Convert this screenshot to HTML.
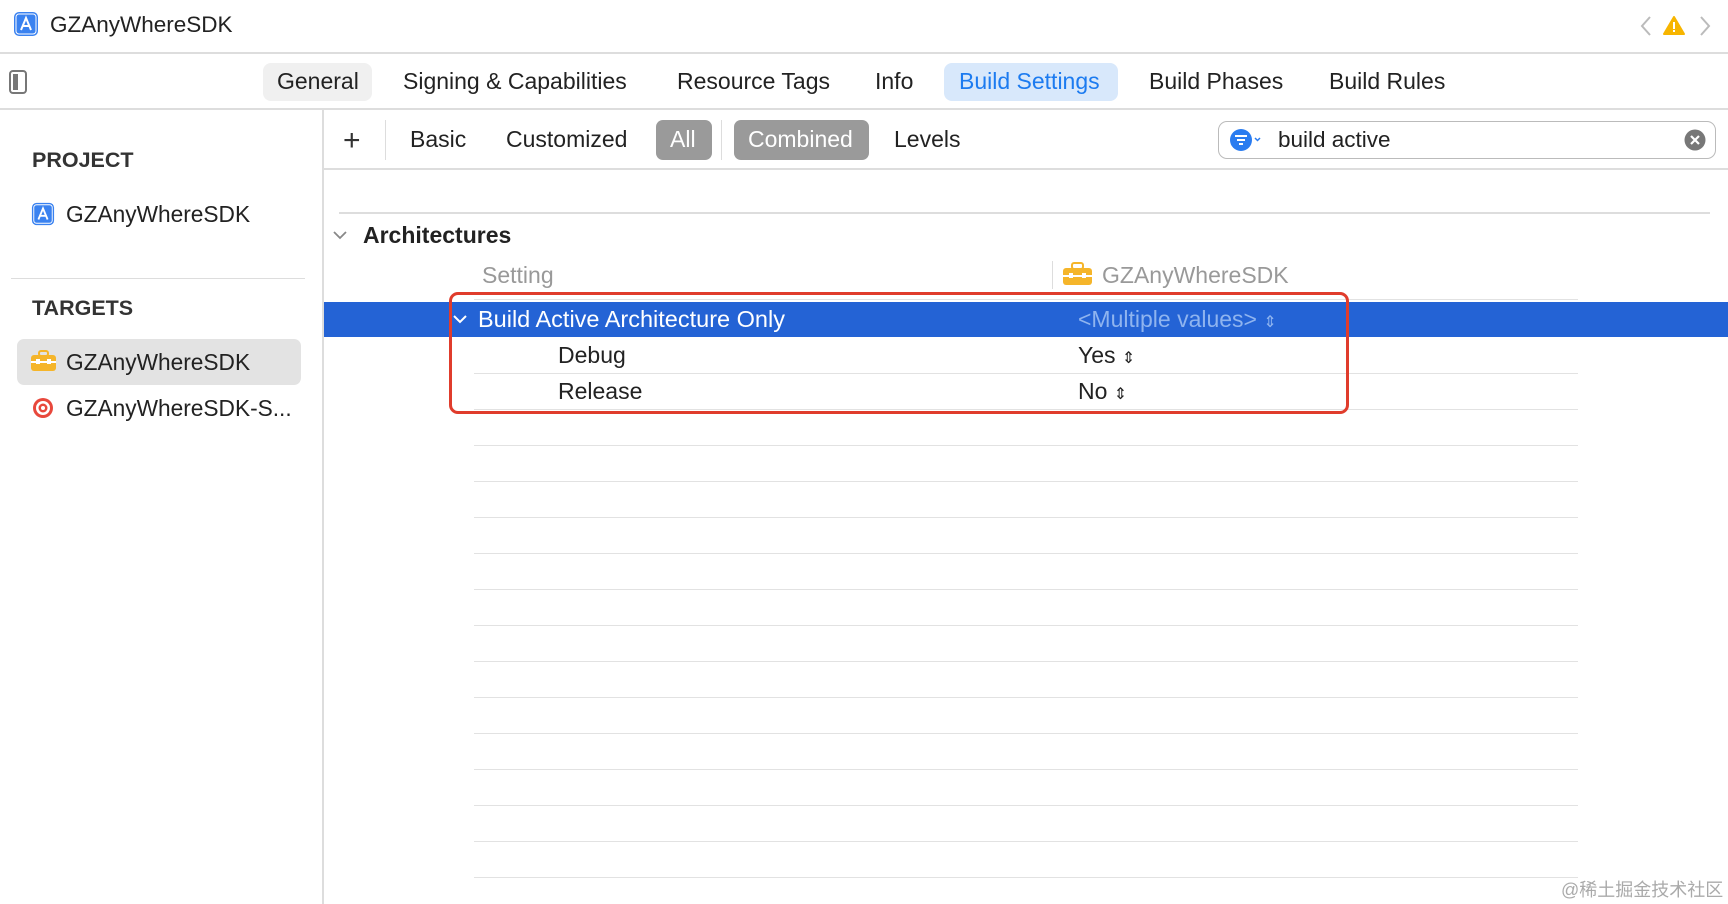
<!DOCTYPE html>
<html><head><meta charset="utf-8"><style>
*{margin:0;padding:0;box-sizing:border-box}
body{width:1728px;height:904px;overflow:hidden;background:#fff;font-family:"Liberation Sans","Noto Sans CJK SC",sans-serif;color:#222;position:relative}
.a{position:absolute;white-space:nowrap}
.t{font-size:23px;line-height:26px}
.hl{position:absolute;height:1px;background:#e2e2e2}
</style></head><body>
<!-- title bar -->
<svg class="a" style="left:13px;top:11px" width="26" height="26" viewBox="0 0 26 26"><rect x="1" y="1" width="24" height="24" rx="5" fill="#3a82f0"/><rect x="3" y="3" width="20" height="20" rx="3" fill="none" stroke="#fff" stroke-width="1"/><path d="M8 19 L13 7 L18 19 M10 15 H16" stroke="#fff" stroke-width="2" fill="none"/></svg>
<div class="a" style="left:50px;top:12px;font-size:22.5px">GZAnyWhereSDK</div>
<svg class="a" style="left:1637px;top:14px" width="80" height="24"><path d="M13 3 L5 12 L13 21" stroke="#bbb" stroke-width="2" fill="none"/><path d="M37 3 L47 20 H27 Z" fill="#f7b500" stroke="#f7b500" stroke-linejoin="round" stroke-width="2"/><rect x="36" y="8" width="2" height="7" fill="#fff"/><rect x="36" y="16" width="2" height="2" fill="#fff"/><path d="M64 3 L72 12 L64 21" stroke="#bbb" stroke-width="2" fill="none"/></svg>
<div class="hl" style="left:0;top:52px;width:1728px;background:#ddd;height:2px"></div>
<!-- tab bar -->
<div class="a" style="left:9px;top:70px;width:18px;height:24px;border:2px solid #777;border-radius:4px"><div style="width:5px;height:16px;background:#777;margin:2px 0 0 2px"></div></div>
<div class="a" style="left:263px;top:63px;width:109px;height:38px;background:#f0f0f0;border-radius:8px"></div>
<div class="a" style="left:944px;top:63px;width:174px;height:38px;background:#d8e8fb;border-radius:8px"></div>
<div class="a t" style="left:277px;top:68px">General</div>
<div class="a t" style="left:403px;top:68px">Signing &amp; Capabilities</div>
<div class="a t" style="left:677px;top:68px">Resource Tags</div>
<div class="a t" style="left:875px;top:68px">Info</div>
<div class="a t" style="left:959px;top:68px;color:#1c7bf0">Build Settings</div>
<div class="a t" style="left:1149px;top:68px">Build Phases</div>
<div class="a t" style="left:1329px;top:68px">Build Rules</div>
<div class="hl" style="left:0;top:108px;width:1728px;background:#ddd;height:2px"></div>
<!-- sidebar -->
<div class="a" style="left:322px;top:110px;width:2px;height:794px;background:#ddd"></div>
<div class="a" style="left:32px;top:148px;font-size:21.5px;font-weight:bold;color:#333">PROJECT</div>
<svg class="a" style="left:31px;top:202px" width="24" height="24" viewBox="0 0 26 26"><rect x="1" y="1" width="24" height="24" rx="5" fill="#3a82f0"/><rect x="3" y="3" width="20" height="20" rx="3" fill="none" stroke="#fff" stroke-width="1"/><path d="M8 19 L13 7 L18 19 M10 15 H16" stroke="#fff" stroke-width="2" fill="none"/></svg>
<div class="a" style="left:66px;top:201px;font-size:22.7px">GZAnyWhereSDK</div>
<div class="hl" style="left:11px;top:278px;width:294px;background:#ddd"></div>
<div class="a" style="left:32px;top:296px;font-size:21.5px;font-weight:bold;color:#333">TARGETS</div>
<div class="a" style="left:17px;top:339px;width:284px;height:46px;background:#e3e3e3;border-radius:7px"></div>
<svg class="a" style="left:30px;top:350px" width="27" height="22"><rect x="1" y="5" width="25" height="16" rx="3" fill="#f5b52a"/><rect x="9" y="1" width="9" height="5" rx="2" fill="none" stroke="#f5b52a" stroke-width="2"/><rect x="1" y="11" width="25" height="2" fill="#fff"/><rect x="6" y="9" width="4" height="5" fill="#fff"/><rect x="17" y="9" width="4" height="5" fill="#fff"/></svg>
<div class="a" style="left:66px;top:349px;font-size:22.7px">GZAnyWhereSDK</div>
<svg class="a" style="left:32px;top:397px" width="22" height="22"><circle cx="11" cy="11" r="10" fill="#e8483c"/><circle cx="11" cy="11" r="7" fill="#fff"/><circle cx="11" cy="11" r="4.5" fill="#e8483c"/><circle cx="11" cy="11" r="2" fill="#fff"/></svg>
<div class="a" style="left:66px;top:395px;font-size:22.7px">GZAnyWhereSDK-S...</div>
<!-- filter bar -->
<div class="a" style="left:343px;top:126px;font-size:30px;line-height:30px;font-weight:300;color:#333">+</div>
<div class="a" style="left:385px;top:120px;width:1px;height:40px;background:#ddd"></div>
<div class="a t" style="left:410px;top:126px">Basic</div>
<div class="a t" style="left:506px;top:126px">Customized</div>
<div class="a" style="left:656px;top:120px;width:56px;height:40px;background:#9a9a9a;border-radius:7px"></div>
<div class="a t" style="left:670px;top:126px;color:#fff">All</div>
<div class="a" style="left:721px;top:120px;width:1px;height:40px;background:#ddd"></div>
<div class="a" style="left:734px;top:120px;width:135px;height:40px;background:#9a9a9a;border-radius:7px"></div>
<div class="a t" style="left:748px;top:126px;color:#fff">Combined</div>
<div class="a t" style="left:894px;top:126px">Levels</div>
<div class="a" style="left:1218px;top:121px;width:498px;height:38px;border:1.5px solid #bbb;border-radius:9px"></div>
<svg class="a" style="left:1228px;top:127px" width="34" height="26"><circle cx="13" cy="13" r="11" fill="#2a7cf0"/><path d="M7 9H19M9 13H17M11 17H15" stroke="#fff" stroke-width="2"/><path d="M27 11 L29.5 13.5 L32 11" stroke="#2a7cf0" stroke-width="1.5" fill="none"/></svg>
<div class="a" style="left:1278px;top:127px;font-size:22.5px">build active</div>
<svg class="a" style="left:1684px;top:129px" width="22" height="22"><circle cx="11" cy="11" r="10.5" fill="#777"/><path d="M7 7L15 15M15 7L7 15" stroke="#fff" stroke-width="2.2"/></svg>
<div class="hl" style="left:324px;top:168px;width:1404px;background:#ddd;height:2px"></div>
<!-- content -->
<div class="hl" style="left:339px;top:212px;width:1371px;background:#ddd;height:2px"></div>
<svg class="a" style="left:332px;top:229px" width="16" height="12"><path d="M2 3 L8 9 L14 3" stroke="#888" stroke-width="1.8" fill="none"/></svg>
<div class="a" style="left:363px;top:222px;font-size:23px;font-weight:bold">Architectures</div>
<div class="a t" style="left:482px;top:262px;color:#999">Setting</div>
<div class="a" style="left:1052px;top:261px;width:1px;height:28px;background:#ddd"></div>
<svg class="a" style="left:1062px;top:262px" width="31" height="24"><rect x="1" y="6" width="29" height="17" rx="3" fill="#f5b52a"/><rect x="10" y="1" width="11" height="6" rx="2" fill="none" stroke="#f5b52a" stroke-width="2"/><rect x="1" y="13" width="29" height="2" fill="#fff"/><rect x="7" y="11" width="4" height="5" fill="#fff"/><rect x="20" y="11" width="4" height="5" fill="#fff"/></svg>
<div class="a t" style="left:1102px;top:262px;color:#999">GZAnyWhereSDK</div>
<div class="hl" style="left:474px;top:299px;width:1104px"></div>
<div class="a" style="left:324px;top:302px;width:1404px;height:35px;background:#2463d5"></div>
<svg class="a" style="left:452px;top:314px" width="16" height="12"><path d="M2 2 L8 8 L14 2" stroke="#fff" stroke-width="2" fill="none"/></svg>
<div class="a" style="left:478px;top:306px;color:#fff;font-size:23.5px;line-height:26px">Build Active Architecture Only</div>
<div class="a t" style="left:1078px;top:306px;color:#8fb4ef">&lt;Multiple values&gt; <span style="font-size:16px">⇕</span></div>
<div class="a t" style="left:558px;top:342px">Debug</div>
<div class="a t" style="left:1078px;top:342px">Yes <span style="font-size:16px">⇕</span></div>
<div class="a t" style="left:558px;top:378px">Release</div>
<div class="a t" style="left:1078px;top:378px">No <span style="font-size:16px">⇕</span></div>
<div class="hl" style="left:474px;top:373px;width:1104px"></div>
<div class="hl" style="left:474px;top:409px;width:1104px"></div>
<div class="hl" style="left:474px;top:445px;width:1104px"></div>
<div class="hl" style="left:474px;top:481px;width:1104px"></div>
<div class="hl" style="left:474px;top:517px;width:1104px"></div>
<div class="hl" style="left:474px;top:553px;width:1104px"></div>
<div class="hl" style="left:474px;top:589px;width:1104px"></div>
<div class="hl" style="left:474px;top:625px;width:1104px"></div>
<div class="hl" style="left:474px;top:661px;width:1104px"></div>
<div class="hl" style="left:474px;top:697px;width:1104px"></div>
<div class="hl" style="left:474px;top:733px;width:1104px"></div>
<div class="hl" style="left:474px;top:769px;width:1104px"></div>
<div class="hl" style="left:474px;top:805px;width:1104px"></div>
<div class="hl" style="left:474px;top:841px;width:1104px"></div>
<div class="hl" style="left:474px;top:877px;width:1104px"></div>
<div class="a" style="left:449px;top:292px;width:900px;height:122px;border:3.5px solid #e03c2c;border-radius:9px"></div>
<div class="a" style="left:1561px;top:876px;font-size:18px;color:#aaa">@稀土掘金技术社区</div>
</body></html>
